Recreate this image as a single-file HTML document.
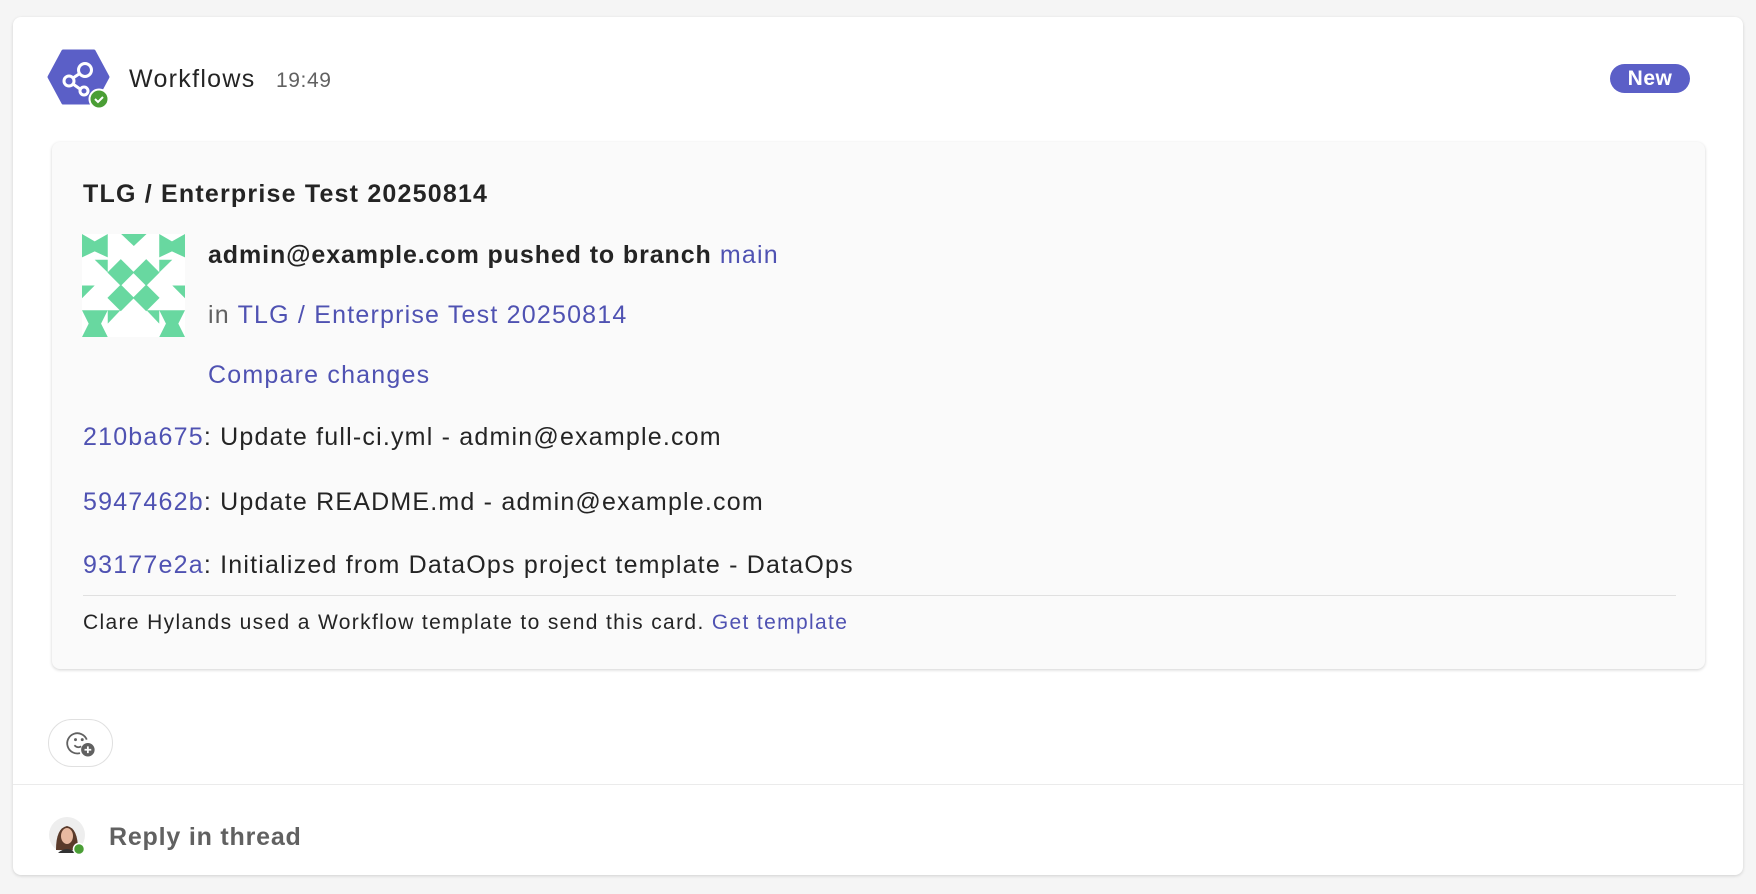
<!DOCTYPE html>
<html><head><meta charset="utf-8"><style>
*{margin:0;padding:0;box-sizing:border-box}
body{width:1756px;height:894px;background:#f5f5f5;font-family:"Liberation Sans",sans-serif;position:relative;overflow:hidden;color:#242424}
.outer{position:absolute;left:13px;top:17px;width:1730px;height:858px;background:#fff;border-radius:8px;box-shadow:0 1px 3px rgba(0,0,0,.15)}
.a{position:absolute;white-space:nowrap}
.link{color:#4f52b2}
.card{position:absolute;left:52px;top:142px;width:1653px;height:527px;background:#fafafa;border-radius:8px;box-shadow:0 1px 3px rgba(0,0,0,.18)}
.t{font-size:25px;letter-spacing:1.2px}
</style></head><body>
<div class="outer"></div>
<svg class="a" style="left:40px;top:46px" width="76" height="68" viewBox="40 46 76 68">
<polygon points="49,77 63,51 94,51 108,77 94,103 63,103" fill="#5b5fc7" stroke="#5b5fc7" stroke-width="3" stroke-linejoin="round"/>
<g fill="none" stroke="#fff" stroke-width="3">
<circle cx="85" cy="70" r="6.5"/><circle cx="69" cy="81" r="5"/><circle cx="84" cy="91" r="4"/>
<line x1="79" y1="74" x2="73" y2="78"/><line x1="73" y1="84" x2="80" y2="89"/></g>
<circle cx="99" cy="99" r="9.5" fill="#4a9e35" stroke="#fff" stroke-width="2"/>
<path d="M95 99l3 3 5-5" fill="none" stroke="#fff" stroke-width="2"/>
</svg>
<div class="a" style="left:129px;top:65px;font-size:25px;letter-spacing:1.3px;color:#242424">Workflows</div>
<div class="a" style="left:276px;top:69px;font-size:21px;letter-spacing:0.6px;color:#616161">19:49</div>
<div class="a" style="left:1610px;top:64px;width:80px;height:29px;border-radius:15px;background:#5b5fc7;color:#fff;font-weight:bold;font-size:21px;letter-spacing:0.5px;text-align:center;line-height:29px">New</div>
<div class="card"></div>
<div class="a" style="left:83px;top:180px;font-size:25px;letter-spacing:1.2px;font-weight:bold">TLG / Enterprise Test 20250814</div>
<svg class="a" style="left:82px;top:234px" width="103" height="103" viewBox="0 0 308 308">
<rect width="308" height="308" fill="#fff"/>
<g fill="#68d8a0">
<polygon points="0,0 38,22 77,0 77,70 38,52 0,70"/>
<polygon points="231,0 269,22 308,0 308,70 269,52 231,70"/>
<polygon points="117,0 193,0 155,36"/>
<polygon points="38,77 77,77 77,115"/><polygon points="270,77 231,77 231,115"/>
<polygon points="116,75 156,115 116,155 76,115"/><polygon points="192,75 232,115 192,155 152,115"/>
<polygon points="116,151 156,191 116,231 76,191"/><polygon points="192,151 232,191 192,231 152,191"/>
<polygon points="0,154 38,154 0,192"/><polygon points="308,154 270,154 308,192"/>
<polygon points="0,228 77,228 57,268 77,308 0,308 20,268"/>
<polygon points="231,228 308,228 288,268 308,308 231,308 251,268"/>
<polygon points="77,228 115,228 77,268"/><polygon points="231,228 193,228 231,268"/>
</g></svg>
<div class="a t" style="left:208px;top:241px"><b style="letter-spacing:0.9px">admin@example.com pushed to branch</b> <span class="link">main</span></div>
<div class="a t" style="left:208px;top:301px;color:#616161">in <span class="link">TLG / Enterprise Test 20250814</span></div>
<div class="a t link" style="left:208px;top:361px">Compare changes</div>
<div class="a t" style="left:83px;top:423px"><span class="link">210ba675</span>: Update full-ci.yml - admin@example.com</div>
<div class="a t" style="left:83px;top:488px"><span class="link">5947462b</span>: Update README.md - admin@example.com</div>
<div class="a t" style="left:83px;top:551px"><span class="link">93177e2a</span>: Initialized from DataOps project template - DataOps</div>
<div class="a" style="left:83px;top:595px;width:1593px;height:1px;background:#e0e0e0"></div>
<div class="a" style="left:83px;top:611px;font-size:21px;letter-spacing:1.35px">Clare Hylands used a Workflow template to send this card. <span class="link">Get template</span></div>
<div class="a" style="left:48px;top:719px;width:65px;height:48px;border:1px solid #e0e0e0;border-radius:24px;background:#fff"></div>
<svg class="a" style="left:62px;top:725px" width="36" height="36" viewBox="0 0 32 32">
<path d="M22 13a9 9 0 1 0-6 12" fill="none" stroke="#616161" stroke-width="1.6"/>
<circle cx="12" cy="13" r="1.3" fill="#616161"/><circle cx="18" cy="13" r="1.3" fill="#616161"/>
<path d="M11 18q3 3 6 1" fill="none" stroke="#616161" stroke-width="1.5"/>
<circle cx="23" cy="22" r="6" fill="#616161"/><path d="M23 19v6M20 22h6" stroke="#fff" stroke-width="1.6"/>
</svg>
<div class="a" style="left:13px;top:784px;width:1730px;height:1px;background:#ebebeb"></div>
<svg class="a" style="left:48px;top:816px" width="42" height="42" viewBox="0 0 42 42">
<circle cx="19" cy="19" r="18" fill="#eee"/>
<path d="M8 34q0-22 11-24q11 2 11 24z" fill="#5a3a2a"/>
<ellipse cx="19" cy="20" rx="6" ry="8" fill="#e8b9a0"/>
<path d="M10 37q9-8 18 0z" fill="#333"/>
<circle cx="31" cy="33" r="5.5" fill="#4a9e35" stroke="#fff" stroke-width="1.5"/>
</svg>
<div class="a" style="left:109px;top:823px;font-size:25px;letter-spacing:0.8px;font-weight:bold;color:#616161">Reply in thread</div>
</body></html>
